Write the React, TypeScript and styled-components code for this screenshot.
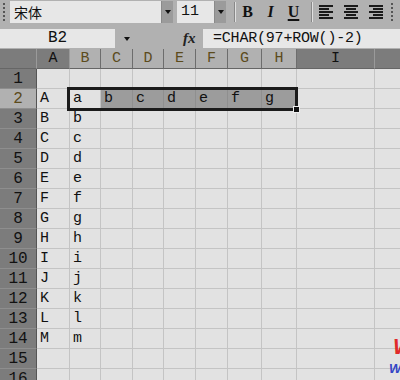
import styled, { createGlobalStyle } from 'styled-components';

const GlobalStyle = createGlobalStyle`
  html, body {
    margin: 0;
    padding: 0;
    background: #e2e2e2;
    overflow: hidden;
  }
  body {
    font-family: 'Liberation Mono', 'Noto Sans CJK SC', monospace;
  }
`;

const COLUMNS = [37, 33, 31, 32, 31, 32, 32, 34, 35, 78, 40];
const LETTERS = ['A', 'B', 'C', 'D', 'E', 'F', 'G', 'H', 'I', ''];
const UPPER = 'ABCDEFGHIJKLM'.split('');
const LOWER = 'abcdefghijklm'.split('');

const Window = styled.div`
  position: relative;
  width: 400px;
  height: 380px;
  overflow: hidden;
  background: #e2e2e2;
`;

const Toolbar = styled.div`
  display: flex;
  align-items: flex-start;
  height: 26px;
  padding: 1px 0 0 3px;
  box-sizing: border-box;
  background: #b1b1b1;
`;

const Grip = styled.span<{ $left?: number }>`
  width: 2px;
  height: 18px;
  margin: 2px 5px 0 ${(p) => p.$left ?? 0}px;
  background: repeating-linear-gradient(#555 0 2px, transparent 2px 4px);
`;

const Combo = styled.div<{ $width: number }>`
  display: flex;
  width: ${(p) => p.$width}px;
  height: 22px;
  margin-right: 4px;
  background: #e7e7e7;
  box-sizing: border-box;
`;

const ComboText = styled.span<{ $cjk?: boolean }>`
  flex: 1;
  padding: 2px 0 0 4px;
  font-family: ${(p) =>
    p.$cjk ? "'Noto Sans CJK SC', sans-serif" : "'Liberation Mono', monospace"};
  font-size: ${(p) => (p.$cjk ? 14 : 15)}px;
  line-height: 18px;
  color: #111;
`;

const ComboButton = styled.span`
  display: flex;
  align-items: center;
  justify-content: center;
  width: 11px;
  background: #9b9b9b;
  border-left: 1px solid #8a8a8a;
`;

const Triangle = styled.span`
  width: 0;
  height: 0;
  border-left: 3px solid transparent;
  border-right: 3px solid transparent;
  border-top: 4px solid #111;
`;

const Separator = styled.span<{ $left: number }>`
  width: 1px;
  height: 20px;
  margin: 1px 1px 0 ${(p) => p.$left}px;
  background: #888;
  box-shadow: 1px 0 0 #e0e0e0;
`;

const ToolButton = styled.span<{ $width?: number }>`
  display: flex;
  align-items: center;
  justify-content: center;
  width: ${(p) => p.$width ?? 23}px;
  height: 22px;
`;

const BoldGlyph = styled.span`
  font-family: 'Liberation Serif', serif;
  font-weight: 700;
  font-size: 16px;
  color: #111;
`;

const ItalicGlyph = styled(BoldGlyph)`
  font-style: italic;
`;

const UnderGlyph = styled(BoldGlyph)`
  text-decoration: underline;
  text-decoration-thickness: 2px;
  text-underline-offset: 2px;
`;

const FormulaBar = styled.div`
  display: flex;
  align-items: flex-start;
  height: 23px;
  padding-top: 3px;
  box-sizing: border-box;
  background: #b1b1b1;
`;

const NameBox = styled.div`
  width: 115px;
  height: 19px;
  background: #e7e7e7;
  text-align: center;
  font-size: 16px;
  line-height: 19px;
  color: #111;
`;

const NameArrow = styled.span`
  display: flex;
  align-items: center;
  justify-content: center;
  width: 24px;
  height: 19px;
`;

const Fx = styled.span`
  width: 64px;
  padding-left: 44px;
  box-sizing: border-box;
  font-family: 'Liberation Serif', serif;
  font-style: italic;
  font-weight: 700;
  font-size: 15px;
  line-height: 19px;
  color: #222;
`;

const FormulaInput = styled.div`
  flex: 1;
  height: 19px;
  padding-left: 10px;
  background: #e7e7e7;
  font-size: 15px;
  line-height: 19px;
  color: #111;
  letter-spacing: -0.2px;
`;

const Sheet = styled.div`
  position: relative;
  display: grid;
  grid-template-columns: ${COLUMNS.map((c) => `${c}px`).join(' ')};
  grid-auto-rows: 20px;
`;

const Corner = styled.div`
  background: #7c7c7c;
  border-right: 1px solid #9a9a9a;
  border-bottom: 1px solid #666;
`;

const ColHead = styled.div<{ $selected?: boolean }>`
  display: flex;
  align-items: center;
  justify-content: center;
  box-sizing: border-box;
  background: ${(p) => (p.$selected ? '#b1b1b1' : '#7c7c7c')};
  border-right: 1px solid ${(p) => (p.$selected ? '#6d6d6d' : '#9a9a9a')};
  border-bottom: 1px solid #666;
  color: ${(p) => (p.$selected ? '#5c4b1c' : '#111')};
  font-size: 15px;
`;

const RowHead = styled.div<{ $selected?: boolean }>`
  display: flex;
  align-items: center;
  justify-content: center;
  box-sizing: border-box;
  background: ${(p) => (p.$selected ? '#b1b1b1' : '#7c7c7c')};
  border-right: 1px solid #555;
  border-bottom: 1px solid #8e8e8e;
  color: ${(p) => (p.$selected ? '#5c4b1c' : '#111')};
  font-size: 16px;
`;

const Cell = styled.div<{ $range?: boolean }>`
  display: flex;
  align-items: center;
  padding-left: 3px;
  box-sizing: border-box;
  background: ${(p) => (p.$range ? '#9c9c9c' : '#e2e2e2')};
  border-right: 1px solid ${(p) => (p.$range ? '#8f8f8f' : '#c4c4c4')};
  border-bottom: 1px solid #c4c4c4;
  font-size: 15px;
  color: #111;
`;

const Selection = styled.div`
  position: absolute;
  left: 67px;
  top: 38px;
  width: 231px;
  height: 24px;
  border: 3px solid #1b1b1b;
  box-sizing: border-box;
  pointer-events: none;
`;

const FillHandle = styled.span`
  position: absolute;
  right: -5px;
  bottom: -5px;
  width: 5px;
  height: 5px;
  background: #111;
  border: 1px solid #eee;
`;

const Mark = styled.span<{ $color: string; $size: number; $left: number; $top: number }>`
  position: absolute;
  left: ${(p) => p.$left}px;
  top: ${(p) => p.$top}px;
  font-family: 'Liberation Sans', sans-serif;
  font-style: italic;
  font-weight: 700;
  font-size: ${(p) => p.$size}px;
  color: ${(p) => p.$color};
`;

const AlignIcon = ({ side }: { side: 'left' | 'center' | 'right' }) => {
  const lines = [14, 10, 14, 10, 14];
  return (
    <svg width="16" height="16" viewBox="0 0 16 16">
      {lines.map((w, i) => {
        const x = side === 'left' ? 1 : side === 'right' ? 15 - w : 8 - w / 2;
        return <rect key={i} x={x} y={1 + i * 3} width={w} height={2} fill="#1a1a1a" />;
      })}
    </svg>
  );
};

const cellText = (row: number, col: number) => {
  if (row === 2) {
    if (col === 0) return 'A';
    if (col >= 1 && col <= 7) return LOWER[col - 1];
    return '';
  }
  if (row <= 14 && row >= 2) {
    if (col === 0) return UPPER[row - 2];
    if (col === 1) return LOWER[row - 2];
  }
  return '';
};

export default function App() {
  const rows = Array.from({ length: 16 }, (_, i) => i + 1);
  return (
    <Window>
      <GlobalStyle />
      <Toolbar>
        <Grip />
        <Combo $width={163}>
          <ComboText $cjk>宋体</ComboText>
          <ComboButton>
            <Triangle />
          </ComboButton>
        </Combo>
        <Combo $width={49}>
          <ComboText>11</ComboText>
          <ComboButton>
            <Triangle />
          </ComboButton>
        </Combo>
        <Separator $left={4} />
        <ToolButton>
          <BoldGlyph>B</BoldGlyph>
        </ToolButton>
        <ToolButton>
          <ItalicGlyph>I</ItalicGlyph>
        </ToolButton>
        <ToolButton>
          <UnderGlyph>U</UnderGlyph>
        </ToolButton>
        <Separator $left={6} />
        <ToolButton $width={25}>
          <AlignIcon side="left" />
        </ToolButton>
        <ToolButton $width={25}>
          <AlignIcon side="center" />
        </ToolButton>
        <ToolButton $width={25}>
          <AlignIcon side="right" />
        </ToolButton>
        <Grip $left={3} />
      </Toolbar>
      <FormulaBar>
        <NameBox>B2</NameBox>
        <NameArrow>
          <Triangle />
        </NameArrow>
        <Fx>fx</Fx>
        <FormulaInput>=CHAR(97+ROW()-2)</FormulaInput>
      </FormulaBar>
      <Sheet>
        <Corner />
        {LETTERS.map((l, i) => (
          <ColHead key={i} $selected={i >= 1 && i <= 7}>
            {l}
          </ColHead>
        ))}
        {rows.map((r) => [
          <RowHead key={`h${r}`} $selected={r === 2}>
            {r}
          </RowHead>,
          ...LETTERS.map((_, c) => (
            <Cell key={`${r}-${c}`} $range={r === 2 && c >= 2 && c <= 7}>
              {cellText(r, c)}
            </Cell>
          )),
        ])}
        <Selection>
          <FillHandle />
        </Selection>
      </Sheet>
      <Mark $color="#e02a2a" $size={22} $left={393} $top={334}>
        W
      </Mark>
      <Mark $color="#3446c6" $size={13} $left={389} $top={361}>
        W
      </Mark>
    </Window>
  );
}
